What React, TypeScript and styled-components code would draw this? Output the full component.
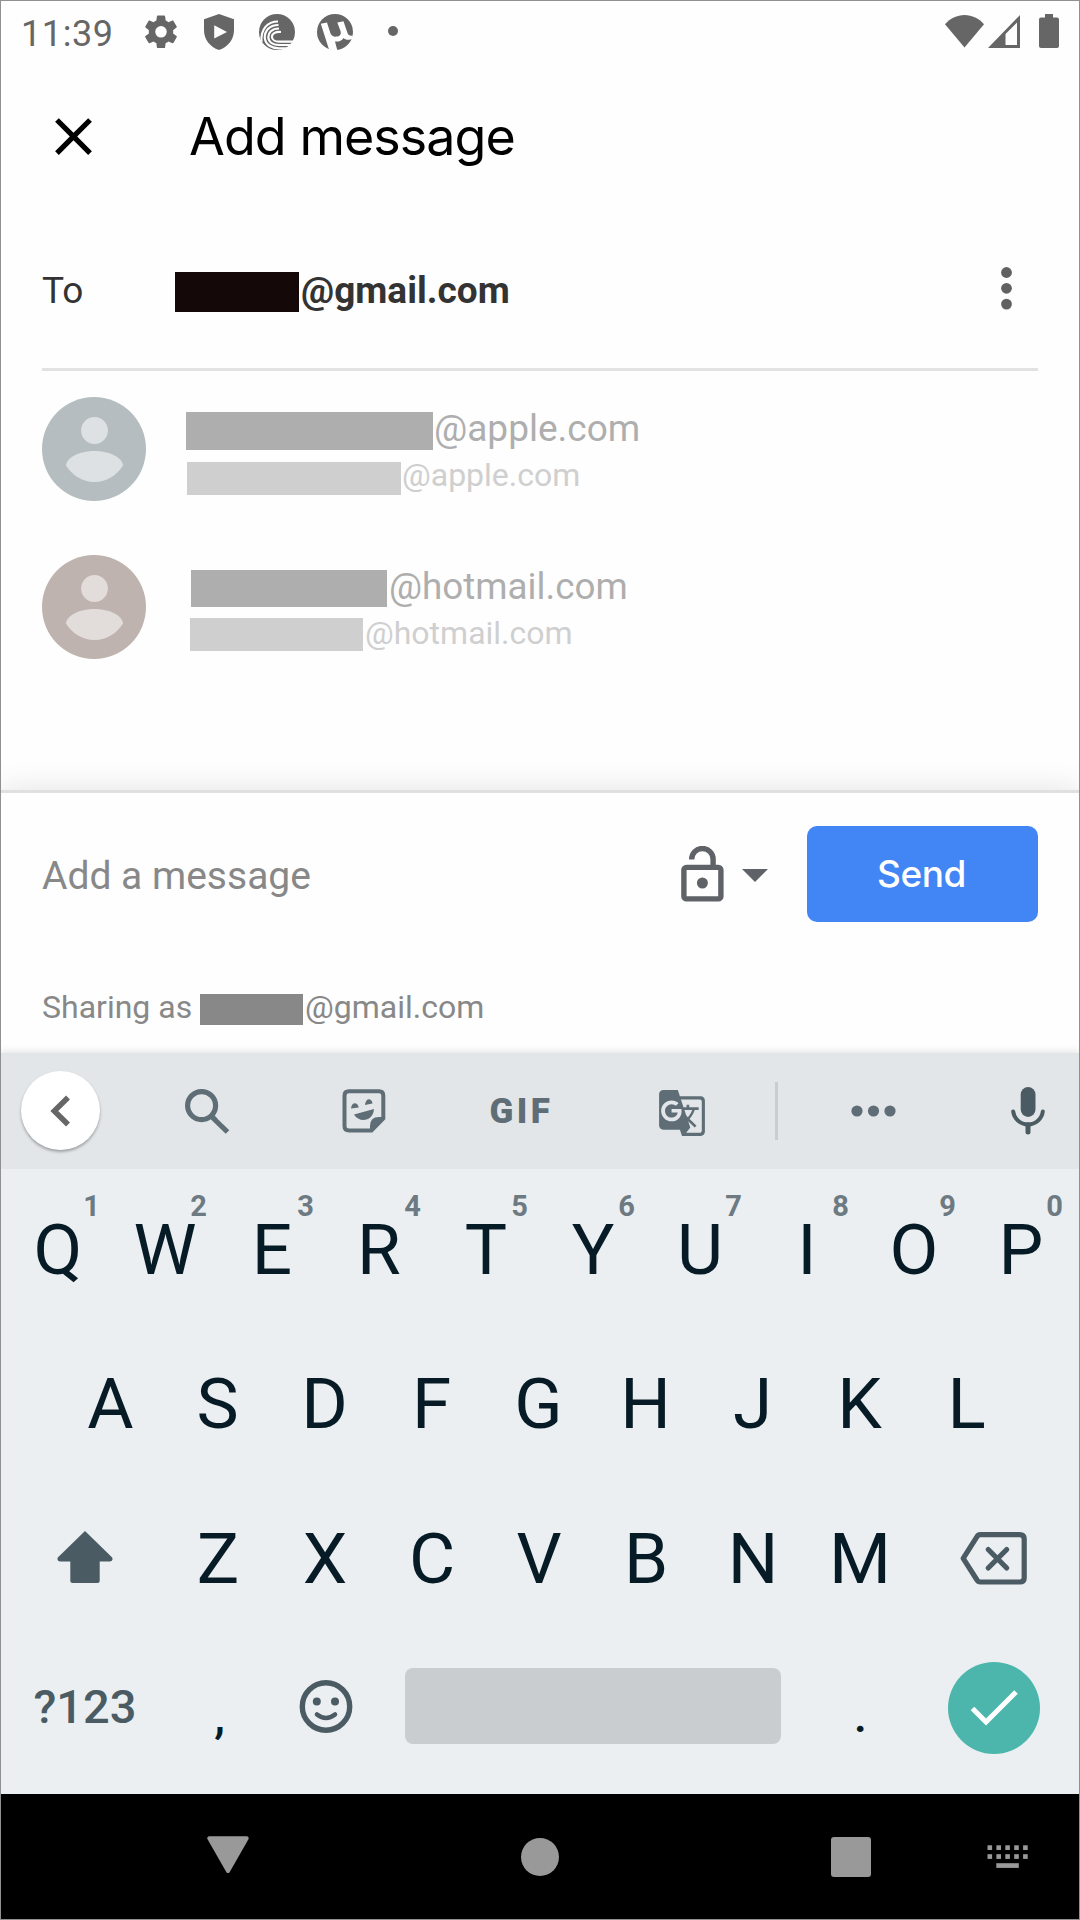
import React from "react";
import styled, { createGlobalStyle } from "styled-components";
import { MdClose, MdGTranslate } from "react-icons/md";

const GlobalStyle = createGlobalStyle`
  *, *::before, *::after { box-sizing: border-box; }
  body { margin: 0; background: #fff; }
  svg { display: block; flex: none; }
`;

const Screen = styled.div`
  position: relative;
  display: flex;
  flex-direction: column;
  width: 1080px;
  height: 1920px;
  overflow: hidden;
  background: #fefefe;
  font-family: Roboto, "Liberation Sans", sans-serif;
  white-space: nowrap;

  &::after {
    content: "";
    position: absolute;
    inset: 0;
    border: 1px solid #909090;
    pointer-events: none;
    z-index: 5;
  }
`;

/* ---------- status bar ---------- */

const StatusBar = styled.header`
  display: flex;
  align-items: center;
  height: 64px;
  padding: 0 21px;
  color: #666;
`;

const Clock = styled.span`
  width: 120px;
  padding-top: 3px;
  font-size: 36px;
  letter-spacing: 0.6px;
  line-height: 60px;
`;

const Notifications = styled.div`
  display: flex;
  flex: 1;
  align-items: center;
  gap: 18px;
`;

const SystemIcons = styled.div`
  display: flex;
  align-items: center;
  gap: 4px;
  padding-bottom: 2px;

  svg:last-child { margin-left: 15px; }
`;

/* ---------- title ---------- */

const TitleBar = styled.div`
  display: flex;
  align-items: center;
  height: 144px;
  padding-left: 42px;
`;

const Title = styled.h1`
  margin: 2px 0 0 84px;
  color: #000;
  font-family: Inter, "Liberation Sans", sans-serif;
  font-size: 52px;
  font-weight: 400;
  letter-spacing: -0.95px;
  line-height: 64px;
`;

/* ---------- recipient ---------- */

const RecipientRow = styled.div`
  display: flex;
  align-items: center;
  height: 163px;
  margin: 0 42px;
  border-bottom: 3px solid #e2e2e2;
  color: #333;
  font-size: 37px;
`;

const FieldLabel = styled.span`
  width: 133px;
  padding-top: 5px;
`;

const Recipient = styled.strong`
  flex: 1;
  padding: 5px 0 0 2px;
  font-weight: 700;
`;

const Mask = styled.span<{ $w: number; $h: number; $color: string }>`
  flex: none;
  width: ${(p) => p.$w}px;
  height: ${(p) => p.$h}px;
  background: ${(p) => p.$color};
`;

const RecipientMask = styled(Mask)`
  margin-top: 8px;
`;

const MenuIcon = styled.svg`
  margin-right: 26px;
`;

/* ---------- suggestions ---------- */

const Suggestions = styled.ul`
  height: 419px;
  margin: 0;
  padding: 0 42px;
  list-style: none;
`;

const Suggestion = styled.li`
  display: flex;
  height: 158px;
  padding-top: 26px;
`;

const Lines = styled.div`
  display: flex;
  flex-direction: column;
  padding: 15px 0 0 40px;
`;

const Line = styled.div<{ $indent: number; $gap?: number }>`
  display: flex;
  align-items: flex-start;
  margin: ${(p) => p.$gap ?? 0}px 0 0 ${(p) => p.$indent}px;
`;

const Address = styled.span<{ $size: number; $leading: number; $color: string; $space?: number }>`
  margin-left: ${(p) => p.$space ?? 2}px;
  color: ${(p) => p.$color};
  font-size: ${(p) => p.$size}px;
  line-height: ${(p) => p.$leading}px;
`;

/* ---------- composer ---------- */

const Composer = styled.section`
  position: relative;
  height: 263px;
  border-top: 3px solid #e0e0e0;
  background: #fefefe;
  box-shadow: 0 -2px 28px rgba(0, 0, 0, 0.1);
  color: #888;
`;

const MessageRow = styled.div`
  display: flex;
  align-items: center;
  height: 162px;
  padding: 0 42px;
`;

const Placeholder = styled.span`
  flex: 1;
  padding-top: 4px;
  font-size: 39px;
`;

const Caret = styled.span`
  margin: 3px 39.5px 0 17.5px;
  border: 13px solid transparent;
  border-top-color: #5f6368;
  border-bottom: 0;
`;

const SendButton = styled.button`
  width: 231px;
  height: 96px;
  padding: 0 2px 2px 0;
  border: 0;
  border-radius: 10px;
  background: #4285f4;
  color: #fff;
  font-family: Inter, "Liberation Sans", sans-serif;
  font-size: 37px;
  font-weight: 500;
  letter-spacing: -0.5px;
`;

const SharingRow = styled.div`
  display: flex;
  align-items: flex-start;
  padding: 39px 42px 0;
  font-size: 32px;
  line-height: 26px;
`;

const SharingLabel = styled.span`
  width: 158px;
`;

/* ---------- keyboard ---------- */

const Keyboard = styled.section`
  position: relative;
  height: 741px;
  background: #ebeff2;
  box-shadow: 0 -1px 8px rgba(0, 0, 0, 0.12);
  color: #061b25;
`;

const Toolbar = styled.div`
  display: grid;
  grid-template-columns: 121px 172px 142px 171px 152px 37px 157px 128px;
  place-items: center;
  height: 116px;
  background: #e2e6e9;
  color: #5f6e76;
`;

const BackButton = styled.div`
  display: grid;
  place-items: center;
  width: 79px;
  height: 79px;
  margin-bottom: 1px;
  border-radius: 50%;
  background: #fff;
  box-shadow: 0 2px 3px rgba(0, 0, 0, 0.3);
`;

const GifLabel = styled.span`
  padding-left: 2px;
  font-size: 35px;
  font-weight: 900;
  letter-spacing: 3.4px;
`;

const TranslateSlot = styled.div`
  padding-top: 4px;
`;

const ToolDivider = styled.span`
  width: 3px;
  height: 58px;
  background: #c9cdd0;
`;

const MicSlot = styled.div`
  justify-self: end;
  margin-right: 35px;
`;

const Keys = styled.div`
  padding-top: 3.5px;
`;

const KeyRow = styled.div<{ $start: number; $height: number }>`
  display: flex;
  align-items: center;
  height: ${(p) => p.$height}px;
  padding-left: ${(p) => p.$start}px;
`;

const Key = styled.div<{ $wide?: boolean }>`
  position: relative;
  display: flex;
  align-items: center;
  justify-content: center;
  width: ${(p) => (p.$wide ? 160 : 107)}px;
  height: 100%;
  font-size: 71px;
  line-height: 54px;
`;

const IconKey = styled(Key)`
  padding-bottom: 2px;
`;

const Hint = styled.span`
  position: absolute;
  top: 19.5px;
  left: 72px;
  width: 30px;
  color: #6d7a81;
  font-size: 29px;
  font-weight: 700;
  line-height: 29px;
  text-align: center;
`;

const SymbolsKey = styled(Key)`
  padding-bottom: 1px;
  color: #4b5b63;
  font-size: 47px;
  font-weight: 500;
`;

const PunctuationKey = styled(Key)`
  padding: 16px 0 0 2px;
  font-size: 48px;
  font-weight: 500;
`;

const SpaceBar = styled.div`
  width: 376px;
  height: 76px;
  margin: 0 25px 3px 26px;
  border-radius: 8px;
  background: #c9cdd0;
`;

const EnterButton = styled.div`
  display: grid;
  place-items: center;
  width: 92px;
  height: 92px;
  margin: 1px 0 0 1px;
  border-radius: 50%;
  background: #4db6ac;
`;

/* ---------- navigation bar ---------- */

const NavBar = styled.nav`
  position: relative;
  display: flex;
  align-items: center;
  height: 126px;
  padding-left: 207px;
  background: #000;
`;

const BackNav = styled.svg`
  margin: 0 272px 5px 0;
`;

const HomeNav = styled.span`
  width: 38px;
  height: 38px;
  margin-right: 272px;
  border-radius: 50%;
  background: #999;
`;

const RecentsNav = styled.span`
  width: 40px;
  height: 40px;
  margin-right: 116px;
  border-radius: 3px;
  background: #999;
`;

/* ---------- drawings ---------- */

const GearIcon = () => (
  <svg width="40" height="40" viewBox="0.2 0.300 23.600 23.600">
    <path
      fill="currentColor"
      d="M19.140 12.940c.04-.3.060-.610.060-.940 0-.320-.020-.640-.070-.940l2.030-1.580c.180-.140.230-.410.120-.610l-1.920-3.320c-.120-.220-.370-.290-.590-.220l-2.390.960c-.5-.380-1.030-.7-1.620-.940L14.400 2.810c-.040-.240-.240-.410-.480-.410h-3.840c-.240 0-.430.170-.470.410L9.250 5.350C8.660 5.590 8.120 5.920 7.630 6.290L5.240 5.330c-.220-.080-.470 0-.590.220L2.740 8.870c-.120.210-.080.470.120.610l2.030 1.580C4.840 11.360 4.800 11.690 4.800 12s.020.640.070.940l-2.030 1.580c-.180.140-.230.410-.120.610l1.920 3.320c.120.220.370.290.590.220l2.390-.960c.5.380 1.030.7 1.620.940l.360 2.540c.050.240.240.410.480.410h3.840c.240 0 .440-.170.470-.410l.360-2.540c.590-.240 1.130-.560 1.620-.940l2.390.960c.220.080.470 0 .590-.220l1.920-3.320c.120-.220.070-.470-.120-.610L19.140 12.940z"
    />
    <circle cx="12" cy="12" r="3.400" fill="#fefefe" />
  </svg>
);

const ShieldIcon = () => (
  <svg width="40" height="36" viewBox="0 0 40 36" fill="currentColor">
    <path
      fillRule="evenodd"
      d="M20 0L35 5.200V16C35 25.500 29 33 20 36C11 33 5 25.500 5 16V5.200ZM15.200 11.200V24.500L28 18Z"
    />
  </svg>
);

const SwirlIcon = () => (
  <svg width="40" height="36" viewBox="-2 0 40 36">
    <defs>
      <clipPath id="swirl-disc">
        <circle cx="18" cy="18" r="18.400" />
      </clipPath>
    </defs>
    <circle cx="18" cy="18" r="18" fill="currentColor" />
    <g clipPath="url(#swirl-disc)" fill="none" stroke="#fefefe" strokeWidth="2.200">
      <path d="M19 7.500C8.500 7.500 1.500 15 2.500 28" />
      <path d="M19.500 11C10 11 5.500 17.500 5.800 24C6.500 31 13 34.300 20 34.300H32" />
      <path d="M20 14.500C12.500 14.500 9.300 19 9.300 23C9.500 28.500 14.500 31 20 31H35" />
      <path d="M22 18C16 17.500 12.800 20 12.900 22.700C13 26 16.500 27.700 20 27.700H37" />
    </g>
  </svg>
);

const MuIcon = () => (
  <svg width="40" height="36" viewBox="-2 0 40 36">
    <defs>
      <clipPath id="mu-disc">
        <circle cx="18" cy="18" r="18.400" />
      </clipPath>
    </defs>
    <circle cx="18" cy="18" r="18" fill="currentColor" />
    <path
      clipPath="url(#mu-disc)"
      fill="#fefefe"
      d="M3.800 9.800L10 8.500L13.500 19.500C14.500 22 17 23 20 22.500C23.500 22 24.300 20 23.500 17L20.300 8.500L26.500 7.300L30.500 19C31.300 21.500 33 22 36.500 21.500V24.500C31.500 26.500 28.500 26 26.500 24C24.500 27 21.500 28 18 27.500L20.500 37H12.500Z"
    />
  </svg>
);

const DotIcon = () => (
  <svg width="40" height="12" viewBox="0 0 40 12" fill="currentColor">
    <circle cx="20" cy="5" r="5" />
  </svg>
);

const WifiIcon = () => (
  <svg width="39" height="33" viewBox="0 0 39 33" fill="currentColor">
    <path d="M19.500 32.500L0 9.200C5 3.500 12 0 19.500 0S34 3.500 39 9.200Z" />
  </svg>
);

const SignalIcon = () => (
  <svg width="32" height="33" viewBox="0 0 32 33" fill="currentColor">
    <path fillRule="evenodd" d="M0 33L32 0V33ZM17.500 19V30H29V7.500Z" />
  </svg>
);

const BatteryIcon = () => (
  <svg width="20" height="34" viewBox="0 0 20 34" fill="currentColor">
    <path d="M6 0H14V3.500H18Q20 3.500 20 5.500V32Q20 34 18 34H2Q0 34 0 32V5.500Q0 3.500 2 3.500H6Z" />
  </svg>
);

const Avatar = ({ disc, figure }: { disc: string; figure: string }) => (
  <svg width="104" height="104" viewBox="0 0 104 104">
    <circle cx="52" cy="52" r="52" fill={disc} />
    <circle cx="52.500" cy="33.500" r="13.400" fill={figure} />
    <path
      fill={figure}
      d="M24 68.500C25 59 40 54 52.500 54S80 59 81 68.500C75 78 65 85 52.500 85S30 78 24 68.500Z"
    />
  </svg>
);

const LockIcon = () => (
  <svg width="43" height="57" viewBox="0 0 43 57" fill="none" stroke="#5f6368" strokeWidth="5.400">
    <rect x="2.900" y="21.400" width="37" height="31.500" rx="2.500" />
    <path d="M10.700 13.500V13.200A10.700 10.700 0 0 1 32.100 13.200V20" />
    <circle cx="21.400" cy="37" r="5.500" fill="#5f6368" stroke="none" />
  </svg>
);

const SearchIcon = () => (
  <svg width="45" height="45" viewBox="0 0 45 45" fill="none" stroke="currentColor" strokeWidth="5.200">
    <circle cx="16.600" cy="16.600" r="14" />
    <path d="M27.500 28.500L42.500 43" />
    <path d="M26.500 26.500L31 31" strokeWidth="4" />
  </svg>
);

const StickerIcon = () => (
  <svg width="44" height="44" viewBox="0 0 44 44" fill="currentColor">
    <path
      d="M7 2.200H37Q41.300 2.200 41.300 6.500V29.500L29.500 41.500H7Q2.500 41.500 2.500 37V6.500Q2.500 2.200 7 2.200Z"
      fill="none"
      stroke="currentColor"
      strokeWidth="4"
    />
    <path d="M28 42V37Q28 28 37 28H42V31L31 42Z" />
    <path d="M9 19.500C9.500 13 15.500 12.500 16.700 18.500Z" />
    <path d="M23 16C23.500 9 29.500 8.500 30.500 14.500Z" />
    <path d="M12 25.500L32 20C31 33 17 34 12 25.500Z" />
  </svg>
);

const MoreIcon = () => (
  <svg width="45" height="12" viewBox="0 0 45 12" fill="currentColor">
    <circle cx="6" cy="6" r="5.600" />
    <circle cx="22.500" cy="6" r="5.600" />
    <circle cx="39" cy="6" r="5.600" />
  </svg>
);

const MicIcon = () => (
  <svg width="34" height="48" viewBox="0 0 34 48" fill="none" stroke="#4b5b63">
    <rect x="9.700" y="0" width="14.800" height="30" rx="7.400" fill="#4b5b63" stroke="none" />
    <path d="M2.200 24.500A14.900 14.500 0 0 0 31.800 24.500" strokeWidth="4" strokeLinecap="round" />
    <path d="M17 38V45" strokeWidth="5" strokeLinecap="round" />
  </svg>
);

const ShiftIcon = () => (
  <svg width="56" height="54" viewBox="0 0 56 54" fill="#4b5b63">
    <path d="M28 0L55.200 26.500Q56.500 30.500 53 30.500H42.700V50Q42.700 52 40.500 52H15.500Q13.300 52 13.300 50V30.500H3Q-.5 30.500.8 26.500Z" />
  </svg>
);

const BackspaceIcon = () => (
  <svg
    width="68"
    height="54"
    viewBox="0.300 -0.500 68 54"
    fill="none"
    stroke="#4b5b63"
    strokeWidth="5.200"
    strokeLinejoin="round"
  >
    <path d="M20.500 3.200H60Q64.500 3.200 64.500 7.500V46.500Q64.500 50.500 60 50.500H20.500Q18.500 50.500 17.300 48.500L3.500 26.800L17.300 5.200Q18.500 3.200 20.500 3.200Z" />
    <path d="M28.500 18L47 36.500M47 18L28.500 36.500" strokeLinecap="round" />
  </svg>
);

const SmileIcon = () => (
  <svg width="54" height="54" viewBox="0 0.500 54 54" fill="none" stroke="#4b5b63">
    <circle cx="27" cy="27" r="23.700" strokeWidth="5.400" />
    <circle cx="17.800" cy="22" r="4" fill="#4b5b63" stroke="none" />
    <circle cx="36" cy="22" r="4" fill="#4b5b63" stroke="none" />
    <path d="M18 35Q27 42 36 35" strokeWidth="4.600" strokeLinecap="round" />
  </svg>
);

const KeyboardIcon = () => (
  <svg width="42" height="24" viewBox="0 0 42 24" fill="#999">
    {[0, 1, 2, 3, 4].map((i) => (
      <React.Fragment key={i}>
        <rect x={0.5 + i * 8.9} y="0.300" width="4.600" height="4.700" />
        <rect x={0.5 + i * 8.9} y="9.200" width="4.600" height="4.700" />
      </React.Fragment>
    ))}
    <rect x="9.300" y="18.200" width="22.500" height="4.700" />
  </svg>
);

const LETTER_ROWS = ["QWERTYUIOP", "ASDFGHJKL", "ZXCVBNM"];
const HINTS = "1234567890";

const letters = (row: number) =>
  LETTER_ROWS[row].split("").map((char, i) => (
    <Key key={char}>
      {char}
      {row === 0 && <Hint>{HINTS[i]}</Hint>}
    </Key>
  ));

export default function App() {
  return (
    <Screen>
      <GlobalStyle />
      <StatusBar>
        <Clock>11:39</Clock>
        <Notifications>
          <GearIcon />
          <ShieldIcon />
          <SwirlIcon />
          <MuIcon />
          <DotIcon />
        </Notifications>
        <SystemIcons>
          <WifiIcon />
          <SignalIcon />
          <BatteryIcon />
        </SystemIcons>
      </StatusBar>

      <TitleBar>
        <MdClose size={63} color="#000" />
        <Title>Add message</Title>
      </TitleBar>

      <RecipientRow>
        <FieldLabel>To</FieldLabel>
        <RecipientMask $w={124} $h={40} $color="#140809" />
        <Recipient>@gmail.com</Recipient>
        <MenuIcon width="11" height="44" viewBox="0 0 11 44" fill="#616161">
          <circle cx="5.500" cy="6.500" r="5.400" />
          <circle cx="5.500" cy="22.300" r="5.400" />
          <circle cx="5.500" cy="38.100" r="5.400" />
        </MenuIcon>
      </RecipientRow>

      <Suggestions>
        <Suggestion>
          <Avatar disc="#b5bdc0" figure="#dde1e4" />
          <Lines>
            <Line $indent={0}>
              <Mask $w={247} $h={38} $color="#aeaeae" />
              <Address $size={37} $leading={34} $color="#aeaeae" $space={1}>@apple.com</Address>
            </Line>
            <Line $indent={1} $gap={12}>
              <Mask $w={214} $h={33} $color="#cfcfcf" />
              <Address $size={32} $leading={26} $color="#cfcfcf" $space={1}>@apple.com</Address>
            </Line>
          </Lines>
        </Suggestion>
        <Suggestion>
          <Avatar disc="#bfb3af" figure="#e2dddb" />
          <Lines>
            <Line $indent={5}>
              <Mask $w={196} $h={37} $color="#aeaeae" />
              <Address $size={36.8} $leading={34} $color="#aeaeae">@hotmail.com</Address>
            </Line>
            <Line $indent={4} $gap={11}>
              <Mask $w={173} $h={33} $color="#cfcfcf" />
              <Address $size={32} $leading={30} $color="#cfcfcf">@hotmail.com</Address>
            </Line>
          </Lines>
        </Suggestion>
      </Suggestions>

      <Composer>
        <MessageRow>
          <Placeholder>Add a message</Placeholder>
          <LockIcon />
          <Caret />
          <SendButton>Send</SendButton>
        </MessageRow>
        <SharingRow>
          <SharingLabel>Sharing as</SharingLabel>
          <Mask $w={103} $h={31} $color="#888" />
          <Address $size={32} $leading={26} $color="#888">@gmail.com</Address>
        </SharingRow>
      </Composer>

      <Keyboard>
        <Toolbar>
          <BackButton>
            <svg width="22" height="32" viewBox="0 0 22 32" fill="none" stroke="#666" strokeWidth="5.500">
              <path d="M18 2.500L4.300 16L18 29.500" />
            </svg>
          </BackButton>
          <SearchIcon />
          <StickerIcon />
          <GifLabel>GIF</GifLabel>
          <TranslateSlot>
            <MdGTranslate size={50} />
          </TranslateSlot>
          <ToolDivider />
          <MoreIcon />
          <MicSlot>
            <MicIcon />
          </MicSlot>
        </Toolbar>
        <Keys>
          <KeyRow $start={4.5} $height={154}>{letters(0)}</KeyRow>
          <KeyRow $start={57} $height={154}>{letters(1)}</KeyRow>
          <KeyRow $start={4.5} $height={156}>
            <IconKey $wide>
              <ShiftIcon />
            </IconKey>
            {letters(2)}
            <IconKey $wide>
              <BackspaceIcon />
            </IconKey>
          </KeyRow>
          <KeyRow $start={5} $height={142}>
            <SymbolsKey $wide>?123</SymbolsKey>
            <PunctuationKey>,</PunctuationKey>
            <IconKey>
              <SmileIcon />
            </IconKey>
            <SpaceBar />
            <PunctuationKey>.</PunctuationKey>
            <Key $wide>
              <EnterButton>
                <svg width="48" height="38" viewBox="0 0 48 38" fill="none" stroke="#fff" strokeWidth="5">
                  <path d="M2.500 19.500L16 33L46 3" />
                </svg>
              </EnterButton>
            </Key>
          </KeyRow>
        </Keys>
      </Keyboard>

      <NavBar>
        <BackNav width="42" height="37" viewBox="0 0 42 37" fill="#999" stroke="#999" strokeWidth="4" strokeLinejoin="round">
          <path d="M2.300 2.300H39.700L21 35Z" />
        </BackNav>
        <HomeNav />
        <RecentsNav />
        <KeyboardIcon />
      </NavBar>
    </Screen>
  );
}
